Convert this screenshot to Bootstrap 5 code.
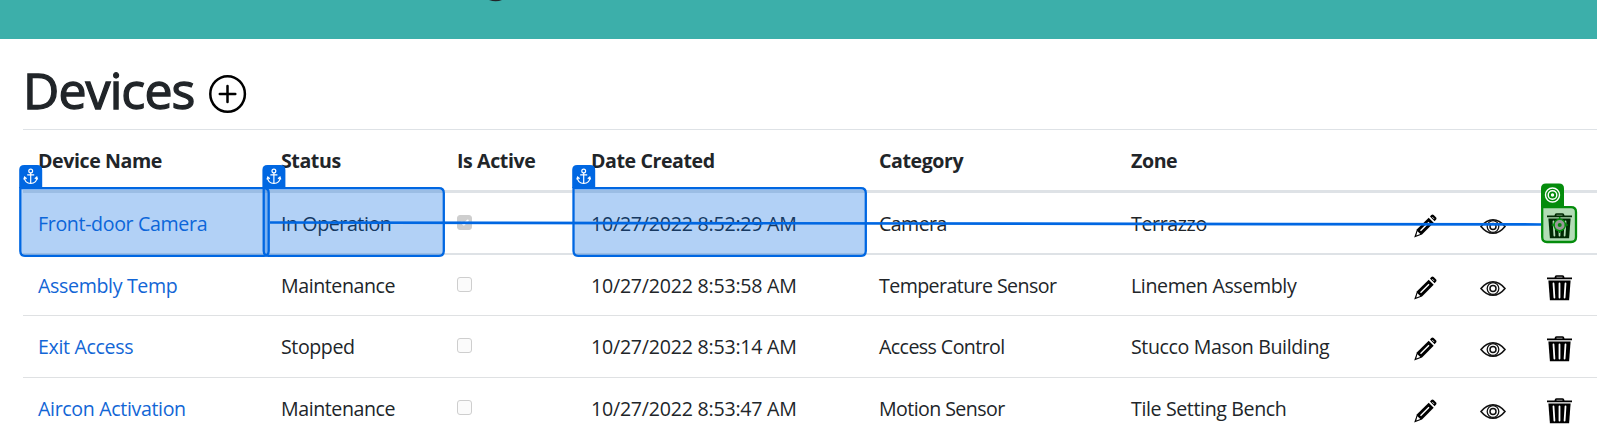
<!DOCTYPE html>
<html lang="en">
<head>
<meta charset="utf-8">
<title>Devices</title>
<link rel="stylesheet" href="https://cdn.jsdelivr.net/npm/bootstrap@5.3.0/dist/css/bootstrap.min.css">
<style>
body{font-family:"Open Sans","Noto Sans",sans-serif;font-size:19.6px;color:#212529;width:1597px;height:425px;overflow:hidden}
.banner{height:39px;background:#3cafaa}
.banner svg{left:488px;top:0}
.heading{height:90px;padding:19px 0 0 23px}
.heading h1{font-size:50px;font-weight:500;line-height:1;letter-spacing:-.9px;margin:0 0 8px;width:186px;-webkit-text-stroke:1.3px #212529}
.devices{table-layout:fixed;width:1574px;margin:0 0 0 23px;border-collapse:separate;border-spacing:0}
.devices th,.devices td{padding:0 0 0 15px;white-space:nowrap;line-height:26px;vertical-align:top;border:0;color:#212529;letter-spacing:-.42px}
.devices th{border-top:1px solid #dee2e6;border-bottom:3px solid #dee2e6;height:64px;padding-top:18px;letter-spacing:-.42px}
.devices td{height:61px;padding-top:18px;border-bottom:1px solid #dfe1e3}
.devices td:nth-child(4){letter-spacing:-.23px}
.devices td:nth-child(5){letter-spacing:-.58px}
.devices td:nth-child(6){letter-spacing:-.38px;padding-left:16px}
.devices th:nth-child(6){padding-left:16px}
.devices tr.first td{height:62px;border-bottom:2px solid #dee2e6}
.devices tr.tall td{height:62px}
.devices td:nth-child(n+7){padding-top:21px}
.devices td:nth-child(9){padding-top:20px}
.devices a{color:#1266d6;text-decoration:none;letter-spacing:-.35px}
.devices .form-check-input{display:block;width:15px;height:15px;margin:4px 0 0;border:1px solid #767676;border-radius:3px;opacity:.35;background-color:#f4f4f4}
.devices .form-check-input:checked{background-color:#767676;border-color:#767676}
.devices svg{display:block}
.overlay{left:0;top:0}
</style>
</head>
<body class="position-relative">
<header class="banner position-relative"><svg class="position-absolute" width="16" height="2"><path d="M1 0H14Q8 2.4 1 0Z" fill="#212529"/></svg></header>
<div class="heading d-flex align-items-center">
<h1>Devices</h1>
<svg width="38" height="40" viewBox="0 0 38 40" fill="none" stroke="#000" stroke-linecap="round"><ellipse cx="18.6" cy="20" rx="17.3" ry="17.8" stroke-width="2.5"/><path d="M18.5 12v16M10.8 20h15.5" stroke-width="2.5"/></svg>
</div>
<svg class="d-none">
<symbol id="pencil" viewBox="0 0 25 25"><path d="M.2 23.500 3 15.300 14.700 3.800 19.700 8.800 8 20.500Z"/><path d="m16 2.500 1.300-1.400c.8-.7 1.600-.7 2.400 0l2.200 2.200c.8.8.8 1.700 0 2.500L20.600 7.300Z"/><path d="m6.500 16.800 8.500-8.500" stroke="#fff" stroke-width="1.500"/><path d="M3.400 17.200 6.300 20 2.300 21.500Z" fill="#fff"/><path d="m18.200 3 2 2" stroke="#bbb" stroke-width="1"/></symbol>
<symbol id="eye" viewBox="0 0 26 16"><g fill="none" stroke="#111"><path d="M1 8Q6.500 1.200 13 1.200T25 8Q19.500 14.800 13 14.800T1 8Z" stroke-width="1.600"/><circle cx="13" cy="8" r="5.800" stroke-width="1.300"/><circle cx="13" cy="8" r="3" stroke-width="1.500"/></g></symbol>
<symbol id="bin" viewBox="0 0 25 26"><path d="M0 2.500h7.500Q7.700.2 9.500.2h6Q17.300.2 17.500 2.500H25v1.700H0Z"/><path d="M1.400 5.500h22.200l-1.500 19.700H2.900Z"/><path d="M9.500 2.200h6" stroke="#999" stroke-width="1"/><path d="M6.500 8.500 7.400 22.500M12.500 8.500v14M18.500 8.500 17.600 22.500" stroke="#fff" stroke-width="1.800" stroke-linecap="round"/></symbol>
</svg>
<table class="devices">
<colgroup><col style="width:243px"><col style="width:176px"><col style="width:134px"><col style="width:288px"><col style="width:251px"><col style="width:284px"><col style="width:66px"><col style="width:67px"><col style="width:65px"></colgroup>
<thead><tr><th>Device Name</th><th>Status</th><th>Is Active</th><th>Date Created</th><th>Category</th><th>Zone</th><th></th><th></th><th></th></tr></thead>
<tbody>
<tr class="first"><td><a href="#">Front-door Camera</a></td><td>In Operation</td><td><input class="form-check-input" type="checkbox" checked disabled></td><td>10/27/2022 8:52:29 AM</td><td>Camera</td><td>Terrazzo</td><td><svg width="25" height="25"><use href="#pencil"/></svg></td><td><svg width="26" height="25"><use href="#eye"/></svg></td><td><svg width="25" height="26"><use href="#bin"/></svg></td></tr>
<tr><td><a href="#">Assembly Temp</a></td><td>Maintenance</td><td><input class="form-check-input" type="checkbox" disabled></td><td>10/27/2022 8:53:58 AM</td><td>Temperature Sensor</td><td>Linemen Assembly</td><td><svg width="25" height="25"><use href="#pencil"/></svg></td><td><svg width="26" height="25"><use href="#eye"/></svg></td><td><svg width="25" height="26"><use href="#bin"/></svg></td></tr>
<tr class="tall"><td><a href="#">Exit Access</a></td><td>Stopped</td><td><input class="form-check-input" type="checkbox" disabled></td><td>10/27/2022 8:53:14 AM</td><td>Access Control</td><td>Stucco Mason Building</td><td><svg width="25" height="25"><use href="#pencil"/></svg></td><td><svg width="26" height="25"><use href="#eye"/></svg></td><td><svg width="25" height="26"><use href="#bin"/></svg></td></tr>
<tr class="tall"><td><a href="#">Aircon Activation</a></td><td>Maintenance</td><td><input class="form-check-input" type="checkbox" disabled></td><td>10/27/2022 8:53:47 AM</td><td>Motion Sensor</td><td>Tile Setting Bench</td><td><svg width="25" height="25"><use href="#pencil"/></svg></td><td><svg width="26" height="25"><use href="#eye"/></svg></td><td><svg width="25" height="26"><use href="#bin"/></svg></td></tr>
</tbody>
</table>
<!-- tab order selection drawn over the table -->
<svg class="overlay position-absolute" width="1597" height="425">
<defs><g id="anchor"><path d="M0 23V5Q0 0 5 0H18Q23 0 23 5V23Z" fill="#0067e2"/><g fill="none" stroke="#fff" stroke-width="1.200"><circle cx="11.500" cy="6" r="1.900"/><path d="M11.500 8V18.500M8 9.800h7M5.300 12.500Q5.500 18.300 11.500 18.500 17.500 18.300 17.700 12.500M4.600 14.500l.8-2.500 2 1.700M18.400 14.500l-.8-2.500-2 1.700"/></g></g></defs>
<g fill="#0067e2" fill-opacity=".3" stroke="#0067e2" stroke-width="2.300">
<path d="M20.300 188.200H264Q268.700 188.200 268.700 193V251Q268.700 255.800 264 255.800H25Q20.300 255.800 20.300 251Z"/>
<path d="M263.700 188.200H439Q443.800 188.200 443.800 193V251Q443.800 255.800 439 255.800H268.500Q263.700 255.800 263.700 251Z"/>
<path d="M573.500 188.200H861Q865.800 188.200 865.800 193V251Q865.800 255.800 861 255.800H578.300Q573.500 255.800 573.500 251Z"/>
</g>
<use href="#anchor" x="19.200" y="165"/><use href="#anchor" x="262.400" y="165"/><use href="#anchor" x="572.200" y="165"/>
<path d="M270 222.500 1542 224.500" stroke="#0067e2" stroke-width="2.700"/>
<path d="M1542.200 207.200H1571Q1576 207.200 1576 212V237Q1576 242 1571 242H1547Q1542.200 242 1542.200 237Z" fill="#048c0c" fill-opacity=".3" stroke="#048c0c" stroke-width="2.300"/>
<path d="M1541 207V188.500Q1541 183.500 1546 183.500H1559Q1564 183.500 1564 188.500V207Z" fill="#048c0c"/>
<g fill="none" stroke="#fff" stroke-width="1.400"><circle cx="1552.500" cy="195" r="7"/><circle cx="1552.500" cy="195" r="4.300"/></g><circle cx="1552.500" cy="195" r="1.700" fill="#fff"/>
<circle cx="1559.700" cy="225" r="5.700" fill="#999" stroke="#048c0c" stroke-width="1.500"/><circle cx="1559.700" cy="225" r="2" fill="#048c0c"/><path d="M1559.700 217v3M1559.700 230v3M1551.700 225h3M1564.700 225h3" stroke="#048c0c" stroke-width="1.500"/>
</svg>
<script src="https://cdn.jsdelivr.net/npm/bootstrap@5.3.0/dist/js/bootstrap.bundle.min.js"></script>
</body>
</html>
